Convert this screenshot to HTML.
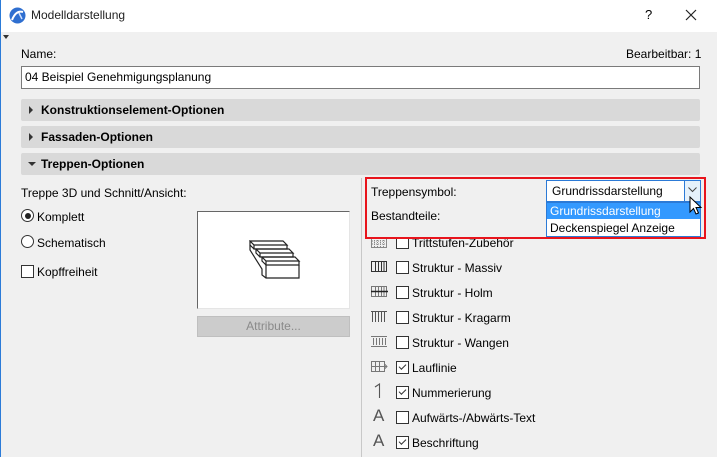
<!DOCTYPE html>
<html><head><meta charset="utf-8"><style>
*{margin:0;padding:0;box-sizing:border-box}
body{width:717px;height:457px;overflow:hidden;background:#f0f0f0;font-family:"Liberation Sans",sans-serif;font-size:12px;color:#000;position:relative}
.a{position:absolute;white-space:nowrap}
.hdr{position:absolute;left:21px;width:679px;height:22px;background:#d9d9d9;border-radius:2px;font-weight:bold;font-size:12px;line-height:22px;padding-left:20px}
.tri{position:absolute;left:8px;top:7px;width:0;height:0;border-top:4px solid transparent;border-bottom:4px solid transparent;border-left:4px solid #333}
.cb{position:absolute;width:13px;height:13px;border:1px solid #333;background:#fff}
.ck::after{content:"";position:absolute;left:2px;width:6px;height:3px;border-left:1.3px solid #333;border-bottom:1.3px solid #333;transform:rotate(-45deg);top:2px}
.ico{position:absolute;left:371px;width:17px;height:12px}
</style></head><body>
<div class="a" style="left:0;top:0;width:717px;height:32px;background:#fff"></div>
<div class="a" style="left:0;top:0;width:1px;height:457px;background:#2b7bd8"></div>
<svg class="a" style="left:9px;top:7px" width="17" height="17" viewBox="0 0 17 17"><circle cx="8.5" cy="8.5" r="8" fill="#2f6fd0"/><path d="M3 13 Q7 3 14 5" stroke="#fff" stroke-width="2" fill="none"/><path d="M10 6 L13 12" stroke="#cfe0ff" stroke-width="1.5"/></svg>
<div class="a" style="left:31px;top:8px;font-size:12px;color:#222">Modelldarstellung</div>
<div class="a" style="left:645px;top:7px;font-size:13px">?</div>
<svg class="a" style="left:685px;top:9px" width="12" height="12"><path d="M1 1L11 11M11 1L1 11" stroke="#222" stroke-width="1.2"/></svg>
<div class="a" style="left:3px;top:35px;border-left:3px solid transparent;border-right:3px solid transparent;border-top:4px solid #333"></div>
<div class="a" style="left:21px;top:47px">Name:</div>
<div class="a" style="left:626px;top:47px">Bearbeitbar: 1</div>
<div class="a" style="left:21px;top:66px;width:679px;height:23px;background:#fff;border:1px solid #7a7a7a;padding:4px 3px;line-height:13px">04 Beispiel Genehmigungsplanung</div>
<div class="hdr" style="top:99px"><span class="tri"></span>Konstruktionselement-Optionen</div>
<div class="hdr" style="top:126px"><span class="tri"></span>Fassaden-Optionen</div>
<div class="hdr" style="top:153px"><span class="tri" style="left:7px;top:9px;border-left:4px solid transparent;border-right:4px solid transparent;border-top:4px solid #333;border-bottom:0"></span>Treppen-Optionen</div>
<div class="a" style="left:21px;top:186px">Treppe 3D und Schnitt/Ansicht:</div>
<div class="a" style="left:21px;top:209px;width:13px;height:13px;border:1px solid #333;border-radius:50%;background:#fff"><div style="position:absolute;left:2.5px;top:2.5px;width:6px;height:6px;border-radius:50%;background:#222"></div></div>
<div class="a" style="left:37px;top:210px">Komplett</div>
<div class="a" style="left:21px;top:235px;width:13px;height:13px;border:1px solid #333;border-radius:50%;background:#fff"></div>
<div class="a" style="left:37px;top:236px">Schematisch</div>
<div class="cb" style="left:21px;top:265px"></div>
<div class="a" style="left:37px;top:265px">Kopffreiheit</div>
<div class="a" style="left:197px;top:211px;width:153px;height:98px;background:#fff;border-left:1px solid #666;border-top:1px solid #666;border-right:1px solid #e5e5e5;border-bottom:1px solid #e5e5e5"></div>
<svg class="a" style="left:249px;top:240px" width="52" height="40" viewBox="0 0 52 40"><g fill="none" stroke="#222" stroke-width="1.2"><path d="M1 1H34L38 5H5Z M5 5V9H38V5 M1 1V5L5 9"/><path d="M7 9H40L44 13H11Z M11 13V17H44V13 M7 9V13L11 17"/><path d="M13 17H46L50 21H17Z M17 21V25H50V21 M13 17V21L17 25"/><path d="M1 5V10L13 29V35L17 38H50V25"/><path d="M17 25V38"/></g></svg>
<div class="a" style="left:197px;top:316px;width:153px;height:21px;background:#cccccc;border:1px solid #bfbfbf;color:#8a8a8a;text-align:center;line-height:19px">Attribute...</div>
<div class="a" style="left:361px;top:178px;width:1px;height:279px;background:#c8c8c8"></div>

<svg class="ico" style="top:237px" viewBox="0 0 17 12"><g stroke="#888" fill="none"><rect x=".5" y=".5" width="15" height="10"/><path d="M3.5 1v9M6.5 1v9M9.5 1v9M12.5 1v9M1 4h14M1 7h14" stroke-dasharray="1 1"/></g></svg>
<svg class="ico" style="top:261px" viewBox="0 0 17 12"><g stroke="#333" fill="none"><rect x=".5" y=".5" width="15" height="10"/><path d="M4.5 1v9M7.5 1v9M10.5 1v9M13 1v9"/></g></svg>
<svg class="ico" style="top:286px" viewBox="0 0 17 12"><g stroke="#777" fill="none"><rect x=".5" y=".5" width="15" height="10"/><path d="M4.5 1v9M7.5 1v9M10.5 1v9M13 1v9"/><path d="M0 5.5h17" stroke="#222" stroke-width="1.5"/></g></svg>
<svg class="ico" style="top:311px" viewBox="0 0 17 12"><g stroke="#555" fill="none"><path d="M1.5 1v10M4.5 1v10M7.5 1v10M10.5 1v10M13.5 1v10M0 .5h16"/></g></svg>
<svg class="ico" style="top:336px" viewBox="0 0 17 12"><g stroke="#777" fill="none"><path d="M0 .5h16M0 10.5h16"/><path d="M2.5 2v7M5.5 2v7M8.5 2v7M11.5 2v7M14.5 2v7"/></g></svg>
<svg class="ico" style="top:361px" viewBox="0 0 17 12"><g stroke="#777" fill="none"><rect x=".5" y=".5" width="13" height="10"/><path d="M4.5 1v9M8.5 1v9M1 5.5h15M13.5 3l2.5 2.5-2.5 2.5"/></g></svg>
<svg class="a" style="left:374px;top:383px" width="10" height="16"><path d="M1 4L5.5 1V15" stroke="#555" stroke-width="1.1" fill="none"/></svg>
<div class="a" style="left:373px;top:406px;font-size:17px;color:#555">A</div>
<div class="a" style="left:373px;top:431px;font-size:17px;color:#555">A</div>

<div class="cb" style="left:396px;top:236px"></div><div class="a" style="left:412px;top:236px">Trittstufen-Zubehör</div>
<div class="cb" style="left:396px;top:261px"></div><div class="a" style="left:412px;top:261px">Struktur - Massiv</div>
<div class="cb" style="left:396px;top:286px"></div><div class="a" style="left:412px;top:286px">Struktur - Holm</div>
<div class="cb" style="left:396px;top:311px"></div><div class="a" style="left:412px;top:311px">Struktur - Kragarm</div>
<div class="cb" style="left:396px;top:336px"></div><div class="a" style="left:412px;top:336px">Struktur - Wangen</div>
<div class="cb ck" style="left:396px;top:361px"></div><div class="a" style="left:412px;top:361px">Lauflinie</div>
<div class="cb ck" style="left:396px;top:386px"></div><div class="a" style="left:412px;top:386px">Nummerierung</div>
<div class="cb" style="left:396px;top:411px"></div><div class="a" style="left:412px;top:411px">Aufwärts-/Abwärts-Text</div>
<div class="cb ck" style="left:396px;top:436px"></div><div class="a" style="left:412px;top:436px">Beschriftung</div>

<div class="a" style="left:365px;top:177px;width:341px;height:62px;border:2px solid #e8141c;background:#f0f0f0"></div>
<div class="a" style="left:371px;top:185px">Treppensymbol:</div>
<div class="a" style="left:371px;top:209px">Bestandteile:</div>
<div class="a" style="left:546px;top:180px;width:155px;height:22px;background:#fff;border:1px solid #2c7ad6"></div>
<div class="a" style="left:552px;top:184px">Grundrissdarstellung</div>
<div class="a" style="left:684px;top:181px;width:16px;height:20px;background:#e5f1fb;border-left:1px solid #2c7ad6"></div>
<svg class="a" style="left:688px;top:187px" width="9" height="6"><path d="M0.5 0.5L4.5 4.5L8.5 0.5" stroke="#444" fill="none"/></svg>
<div class="a" style="left:546px;top:202px;width:155px;height:35px;background:#fff;border:1px solid #2c7ad6"></div>
<div class="a" style="left:547px;top:203px;width:153px;height:16px;background:#3399ff"></div>
<div class="a" style="left:550px;top:204px;color:#fff">Grundrissdarstellung</div>
<div class="a" style="left:550px;top:221px">Deckenspiegel Anzeige</div>
<svg class="a" style="left:689px;top:196px" width="14" height="20"><path d="M1 1V16L4.5 12.5L7 18L9.5 17L7 11.5H12Z" fill="#fff" stroke="#000" stroke-width="1"/></svg>
</body></html>
